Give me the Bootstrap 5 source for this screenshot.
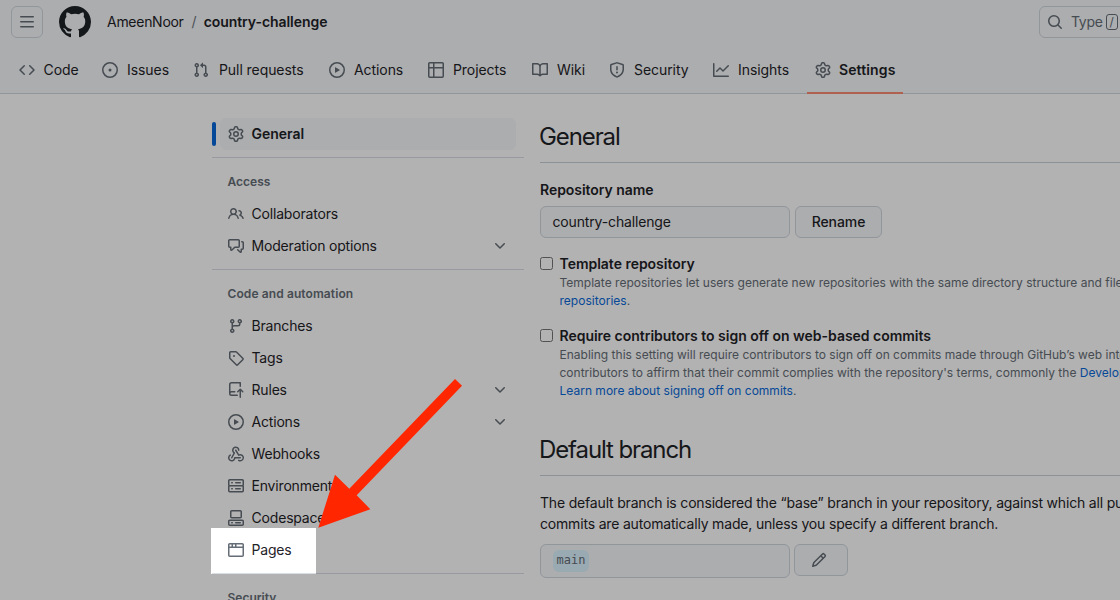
<!DOCTYPE html>
<html lang="en">
<head>
<meta charset="utf-8">
<meta name="viewport" content="width=device-width, initial-scale=1">
<title>Settings · country-challenge</title>
<link href="https://cdn.jsdelivr.net/npm/bootstrap@5.3.0/dist/css/bootstrap.min.css" rel="stylesheet">
<style>
  :root { --ink:#1f2328; --muted:#656d76; --line:#d0d7de; --soft:#f6f8fa; --link:#0969da; }
  body { font-family: Inter, "Liberation Sans", sans-serif; font-size:14px; line-height:21px; color:var(--ink); background:#fff; height:600px; overflow:hidden; position:relative; }
  svg.oct { width:16px; height:16px; fill:var(--muted); flex:none; display:block; }
  a { color:inherit; text-decoration:none; }
  .topbar { background:var(--soft); height:94px; border-bottom:1px solid var(--line); }
  .crumbs { height:44px; padding-left:11px; overflow:hidden; }
  .crumbs span, .crumbs a { padding-bottom:1px; }
  .owner { letter-spacing:-.28px; }
  .repo { letter-spacing:-.06px; margin-left:-1px; }
  .iconbtn { width:32px; height:32px; border:1px solid var(--line); border-radius:6px; background:transparent; }
  .logo { width:32px; height:32px; fill:var(--ink); }
  .search { width:120px; height:32px; border:1px solid var(--line); border-radius:6px; color:var(--muted); padding-left:7px; margin-right:-39px; letter-spacing:-.3px; }
  .slash { width:12px; height:16px; border:1px solid var(--muted); border-radius:3px; font-size:12px; line-height:13px; margin-left:3px; }
  .tabs { height:49px; padding-left:11px; gap:8px; }
  .tabs a { height:50px; padding:2px 0 0 8px; gap:9px; flex:none; letter-spacing:-.07px; white-space:nowrap; }
  .tabs span { padding-bottom:2px; }
  .tabs a.current { font-weight:600; letter-spacing:.12px; gap:8px; box-shadow:inset 0 -2px #fd8c73; }
  .tabs a:nth-child(1) { width:75px; gap:8.5px; }
  .tabs a:nth-child(2) { width:83px; }
  .tabs a:nth-child(3) { width:128px; gap:10px; }
  .tabs a:nth-child(4) { width:91px; }
  .tabs a:nth-child(5), .tabs a:nth-child(7), .tabs a:nth-child(9) { width:96px; }
  .tabs a:nth-child(6) { width:69px; }
  .tabs a:nth-child(8) { width:94px; }
  .page { height:506px; padding-left:212px; overflow:hidden; }
  .side { width:312px; padding-top:24px; flex:none; }
  .side .item { height:32px; margin:0 8px; padding:0 8px; gap:7.5px; border-radius:6px; letter-spacing:-.18px; }
  .side span { padding-bottom:1px; }
  .side .item.current { background:var(--soft); font-weight:600; letter-spacing:0; }
  .marker { width:4px; height:24px; left:-8px; top:4px; border-radius:6px; background:var(--link); }
  .side .rule { height:1px; background:#d8dee4; margin:7px 0 8px; }
  .side .group { height:32px; padding-left:15.5px; font-size:12px; font-weight:600; color:var(--muted); }
  .wide { letter-spacing:.1px; }
  .content { width:700px; margin-left:16px; padding-top:25px; flex:none; white-space:nowrap; }
  .content h2 { font-size:24px; line-height:36px; font-weight:400; margin:0; padding-bottom:7px; border-bottom:1px solid #c9d0d7; letter-spacing:-1.1px; text-indent:-1px; }
  .box { height:32px; border:1px solid var(--line); border-radius:6px; background:var(--soft); }
  .field { width:250px; padding-left:11.5px; letter-spacing:-.15px; }
  .field.tall { height:34px; padding-left:12px; }
  .field > span, .rename > span { padding-bottom:1px; }
  .rename { width:87px; margin-left:5px; letter-spacing:-.08px; }
  .edit { width:54px; margin-left:4px; padding-right:4px; }
  .label-row { margin-top:16px; margin-bottom:6px; letter-spacing:-.05px; }
  .option { margin-top:15px; gap:6.5px; letter-spacing:-.02px; }
  .option .note { font-size:12px; line-height:18px; color:var(--muted); letter-spacing:.01px; }
  .note a { color:var(--link); }
  .second { margin-top:32px !important; }
  .intro { margin-top:16px; margin-bottom:10px; letter-spacing:-.18px; }
  .tick { width:13px; height:13px; border:1px solid #767676; border-radius:2.5px; background:#fff; margin-top:4px; flex:none; }
  .branchname { font-family:"DejaVu Sans Mono", monospace; font-size:12px; line-height:20px; height:22px; padding:0 3.6px; background:#ddf4ff; border-radius:6px; color:var(--muted); letter-spacing:0; }
  .spot { left:211px; top:528px; width:105px; height:46px; box-shadow:0 0 0 1200px rgba(0,0,0,.3); }
  .pointer { left:0; top:0; width:1120px; height:600px; pointer-events:none; }
</style>
</head>
<body>
<svg width="0" height="0" class="position-absolute">
  <symbol id="bars" viewBox="0 0 16 16"><path d="M1 2.75A.75.75 0 0 1 1.75 2h12.5a.75.75 0 0 1 0 1.5H1.75A.75.75 0 0 1 1 2.75Zm0 5A.75.75 0 0 1 1.75 7h12.5a.75.75 0 0 1 0 1.5H1.75A.75.75 0 0 1 1 7.75ZM1.75 12h12.5a.75.75 0 0 1 0 1.5H1.75a.75.75 0 0 1 0-1.5Z"/></symbol>
  <symbol id="github" viewBox="0 0 16 16"><path d="M8 0c4.42 0 8 3.58 8 8a8.013 8.013 0 0 1-5.45 7.59c-.4.08-.55-.17-.55-.38 0-.27.01-1.13.01-2.2 0-.75-.25-1.23-.54-1.48 1.78-.2 3.65-.88 3.65-3.95 0-.88-.31-1.59-.82-2.15.08-.2.36-1.02-.08-2.12 0 0-.67-.22-2.2.82-.64-.18-1.32-.27-2-.27-.68 0-1.36.09-2 .27-1.53-1.03-2.2-.82-2.2-.82-.44 1.1-.16 1.92-.08 2.12-.51.56-.82 1.28-.82 2.15 0 3.06 1.86 3.75 3.64 3.95-.23.2-.44.55-.51 1.07-.46.21-1.61.55-2.33-.66-.15-.24-.6-.83-1.23-.82-.67.01-.27.38.01.53.34.19.73.9.82 1.13.16.45.68 1.31 2.69.94 0 .67.01 1.3.01 1.49 0 .21-.15.45-.55.38A7.995 7.995 0 0 1 0 8c0-4.42 3.58-8 8-8Z"/></symbol>
  <symbol id="code" viewBox="0 0 16 16"><path d="m11.28 3.22 4.25 4.25a.75.75 0 0 1 0 1.06l-4.25 4.25a.749.749 0 0 1-1.275-.326.749.749 0 0 1 .215-.734L13.94 8l-3.72-3.72a.749.749 0 0 1 .326-1.275.749.749 0 0 1 .734.215Zm-6.56 0a.751.751 0 0 1 1.042.018.751.751 0 0 1 .018 1.042L2.06 8l3.72 3.72a.749.749 0 0 1-.326 1.275.749.749 0 0 1-.734-.215L.47 8.53a.75.75 0 0 1 0-1.06Z"/></symbol>
  <symbol id="issue" viewBox="0 0 16 16"><path d="M8 9.5a1.5 1.5 0 1 0 0-3 1.5 1.5 0 0 0 0 3Z"/><path d="M8 0a8 8 0 1 1 0 16A8 8 0 0 1 8 0ZM1.5 8a6.5 6.5 0 1 0 13 0 6.5 6.5 0 0 0-13 0Z"/></symbol>
  <symbol id="pull" viewBox="0 0 16 16"><path d="M1.5 3.25a2.25 2.25 0 1 1 3 2.122v5.256a2.251 2.251 0 1 1-1.5 0V5.372A2.25 2.25 0 0 1 1.5 3.25Zm5.677-.177L9.573.677A.25.25 0 0 1 10 .854V2.5h1A2.5 2.5 0 0 1 13.5 5v5.628a2.251 2.251 0 1 1-1.5 0V5a1 1 0 0 0-1-1h-1v1.646a.25.25 0 0 1-.427.177L7.177 3.427a.25.25 0 0 1 0-.354ZM3.75 2.5a.75.75 0 1 0 0 1.5.75.75 0 0 0 0-1.5Zm0 9.5a.75.75 0 1 0 0 1.5.75.75 0 0 0 0-1.5Zm8.25.75a.75.75 0 1 0 1.5 0 .75.75 0 0 0-1.5 0Z"/></symbol>
  <symbol id="play" viewBox="0 0 16 16"><path d="M8 0a8 8 0 1 1 0 16A8 8 0 0 1 8 0ZM1.5 8a6.5 6.5 0 1 0 13 0 6.5 6.5 0 0 0-13 0Zm4.879-2.773 4.264 2.559a.25.25 0 0 1 0 .428l-4.264 2.559A.25.25 0 0 1 6 10.559V5.442a.25.25 0 0 1 .379-.215Z"/></symbol>
  <symbol id="project" viewBox="0 0 16 16"><path d="M0 1.75C0 .784.784 0 1.75 0h12.5C15.216 0 16 .784 16 1.75v12.5A1.75 1.75 0 0 1 14.25 16H1.75A1.75 1.75 0 0 1 0 14.25ZM6.5 6.5v8h7.75a.25.25 0 0 0 .25-.25V6.5Zm8-1.5V1.75a.25.25 0 0 0-.25-.25H6.5V5Zm-13 1.5v7.75c0 .138.112.25.25.25H5v-8ZM5 5V1.5H1.75a.25.25 0 0 0-.25.25V5Z"/></symbol>
  <symbol id="book" viewBox="0 0 16 16"><path d="M0 1.75A.75.75 0 0 1 .75 1h4.253c1.227 0 2.317.59 3 1.501A3.743 3.743 0 0 1 11.006 1h4.245a.75.75 0 0 1 .75.75v10.5a.75.75 0 0 1-.75.75h-4.507a2.25 2.25 0 0 0-1.591.659l-.622.621a.75.75 0 0 1-1.06 0l-.622-.621A2.25 2.25 0 0 0 5.258 13H.75a.75.75 0 0 1-.75-.75Zm7.251 10.324.004-5.073-.002-2.253A2.25 2.25 0 0 0 5.003 2.5H1.5v9h3.757a3.75 3.75 0 0 1 1.994.574ZM8.755 4.75l-.004 7.322a3.752 3.752 0 0 1 1.992-.572H14.5v-9h-3.495a2.25 2.25 0 0 0-2.25 2.25Z"/></symbol>
  <symbol id="shield" viewBox="0 0 16 16"><path d="M7.467.133a1.748 1.748 0 0 1 1.066 0l5.25 1.68A1.75 1.75 0 0 1 15 3.48V7c0 1.566-.32 3.182-1.303 4.682-.983 1.498-2.585 2.813-5.032 3.855a1.697 1.697 0 0 1-1.33 0c-2.447-1.042-4.049-2.357-5.032-3.855C1.32 10.182 1 8.566 1 7V3.48a1.75 1.75 0 0 1 1.217-1.667Zm.61 1.429a.25.25 0 0 0-.153 0l-5.25 1.68a.25.25 0 0 0-.174.238V7c0 1.358.275 2.666 1.057 3.86.784 1.194 2.121 2.34 4.366 3.297a.196.196 0 0 0 .154 0c2.245-.956 3.582-2.104 4.366-3.298C13.225 9.666 13.5 8.36 13.5 7V3.48a.251.251 0 0 0-.174-.237l-5.25-1.68ZM8.75 4.75v3a.75.75 0 0 1-1.5 0v-3a.75.75 0 0 1 1.5 0ZM9 10.5a1 1 0 1 1-2 0 1 1 0 0 1 2 0Z"/></symbol>
  <symbol id="graph" viewBox="0 0 16 16"><path d="M1.5 1.75V13.5h13.75a.75.75 0 0 1 0 1.5H.75a.75.75 0 0 1-.75-.75V1.75a.75.75 0 0 1 1.5 0Zm14.28 2.53-5.25 5.25a.75.75 0 0 1-1.06 0L7 7.06 4.28 9.78a.751.751 0 0 1-1.042-.018.751.751 0 0 1-.018-1.042l3.25-3.25a.75.75 0 0 1 1.06 0L10 7.94l4.72-4.72a.751.751 0 0 1 1.042.018.751.751 0 0 1 .018 1.042Z"/></symbol>
  <symbol id="gear" viewBox="0 0 16 16"><path d="M8 0a8.2 8.2 0 0 1 .701.031C9.444.095 9.99.645 10.16 1.29l.288 1.107c.018.066.079.158.212.224.231.114.454.243.668.386.123.082.233.09.299.071l1.103-.303c.644-.176 1.392.021 1.82.63.27.385.506.792.704 1.218.315.675.111 1.422-.364 1.891l-.814.806c-.049.048-.098.147-.088.294.016.257.016.515 0 .772-.01.147.038.246.088.294l.814.806c.475.469.679 1.216.364 1.891a7.977 7.977 0 0 1-.704 1.217c-.428.61-1.176.807-1.82.63l-1.102-.302c-.067-.019-.177-.011-.3.071a5.909 5.909 0 0 1-.668.386c-.133.066-.194.158-.211.224l-.29 1.106c-.168.646-.715 1.196-1.458 1.26a8.006 8.006 0 0 1-1.402 0c-.743-.064-1.289-.614-1.458-1.26l-.289-1.106c-.018-.066-.079-.158-.212-.224a5.738 5.738 0 0 1-.668-.386c-.123-.082-.233-.09-.299-.071l-1.103.303c-.644.176-1.392-.021-1.82-.63a8.12 8.12 0 0 1-.704-1.218c-.315-.675-.111-1.422.363-1.891l.815-.806c.05-.048.098-.147.088-.294a6.214 6.214 0 0 1 0-.772c.01-.147-.038-.246-.088-.294l-.815-.806C.635 6.045.431 5.298.746 4.623a7.92 7.92 0 0 1 .704-1.217c.428-.61 1.176-.807 1.82-.63l1.102.302c.067.019.177.011.3-.071.214-.143.437-.272.668-.386.133-.066.194-.158.211-.224l.29-1.106C6.009.645 6.556.095 7.299.03 7.53.01 7.764 0 8 0Zm-.571 1.525c-.036.003-.108.036-.137.146l-.289 1.105c-.147.561-.549.967-.998 1.189-.173.086-.34.183-.5.29-.417.278-.97.423-1.529.27l-1.103-.303c-.109-.03-.175.016-.195.045-.22.312-.412.644-.573.99-.014.031-.021.11.059.19l.815.806c.411.406.562.957.53 1.456a4.709 4.709 0 0 0 0 .582c.032.499-.119 1.05-.53 1.456l-.815.806c-.081.08-.073.159-.059.19.162.346.353.677.573.989.02.03.085.076.195.046l1.102-.303c.56-.153 1.113-.008 1.53.27.161.107.328.204.501.29.447.222.85.629.997 1.189l.289 1.105c.029.109.101.143.137.146a6.6 6.6 0 0 0 1.142 0c.036-.003.108-.036.137-.146l.289-1.105c.147-.561.549-.967.998-1.189.173-.086.34-.183.5-.29.417-.278.97-.423 1.529-.27l1.103.303c.109.029.175-.016.195-.045.22-.313.411-.644.573-.99.014-.031.021-.11-.059-.19l-.815-.806c-.411-.406-.562-.957-.53-1.456a4.709 4.709 0 0 0 0-.582c-.032-.499.119-1.05.53-1.456l.815-.806c.081-.08.073-.159.059-.19a6.464 6.464 0 0 0-.573-.989c-.02-.03-.085-.076-.195-.046l-1.102.303c-.56.153-1.113.008-1.53-.27a4.44 4.44 0 0 0-.501-.29c-.447-.222-.85-.629-.997-1.189l-.289-1.105c-.029-.11-.101-.143-.137-.146a6.6 6.6 0 0 0-1.142 0ZM11 8a3 3 0 1 1-6 0 3 3 0 0 1 6 0ZM9.5 8a1.5 1.5 0 1 0-3.001.001A1.5 1.5 0 0 0 9.5 8Z"/></symbol>
  <symbol id="search" viewBox="0 0 16 16"><path d="M10.68 11.74a6 6 0 0 1-7.922-8.982 6 6 0 0 1 8.982 7.922l3.04 3.04a.749.749 0 0 1-.326 1.275.749.749 0 0 1-.734-.215ZM11.5 7a4.499 4.499 0 1 0-8.997 0A4.499 4.499 0 0 0 11.5 7Z"/></symbol>
  <symbol id="people" viewBox="0 0 16 16"><path d="M2 5.5a3.5 3.5 0 1 1 5.898 2.549 5.508 5.508 0 0 1 3.034 4.084.75.75 0 1 1-1.482.235 4 4 0 0 0-7.9 0 .75.75 0 0 1-1.482-.236A5.507 5.507 0 0 1 3.102 8.05 3.493 3.493 0 0 1 2 5.5ZM11 4a3.001 3.001 0 0 1 2.22 5.018 5.01 5.01 0 0 1 2.56 3.012.749.749 0 0 1-.885.954.752.752 0 0 1-.549-.514 3.507 3.507 0 0 0-2.522-2.372.75.75 0 0 1-.574-.73v-.352a.75.75 0 0 1 .416-.672A1.5 1.5 0 0 0 11 5.5.75.75 0 0 1 11 4Zm-5.5-.5a2 2 0 1 0-.001 3.999A2 2 0 0 0 5.5 3.5Z"/></symbol>
  <symbol id="talk" viewBox="0 0 16 16"><path d="M1.75 1h8.5c.966 0 1.75.784 1.75 1.75v5.5A1.75 1.75 0 0 1 10.25 10H7.061l-2.574 2.573A1.458 1.458 0 0 1 2 11.543V10h-.25A1.75 1.75 0 0 1 0 8.25v-5.5C0 1.784.784 1 1.75 1ZM1.5 2.75v5.5c0 .138.112.25.25.25h1a.75.75 0 0 1 .75.75v2.19l2.72-2.72a.749.749 0 0 1 .53-.22h3.5a.25.25 0 0 0 .25-.25v-5.5a.25.25 0 0 0-.25-.25h-8.5a.25.25 0 0 0-.25.25Zm13 2a.25.25 0 0 0-.25-.25h-.5a.75.75 0 0 1 0-1.5h.5c.966 0 1.75.784 1.75 1.75v5.5A1.75 1.75 0 0 1 14.25 12H14v1.543a1.458 1.458 0 0 1-2.487 1.03L9.22 12.28a.749.749 0 0 1 .326-1.275.749.749 0 0 1 .734.215l2.22 2.22v-2.19a.75.75 0 0 1 .75-.75h1a.25.25 0 0 0 .25-.25Z"/></symbol>
  <symbol id="down" viewBox="0 0 16 16"><path d="M12.78 5.22a.749.749 0 0 1 0 1.06l-4.25 4.25a.749.749 0 0 1-1.06 0L3.22 6.28a.749.749 0 1 1 1.06-1.06L8 8.939l3.72-3.719a.749.749 0 0 1 1.06 0Z"/></symbol>
  <symbol id="branch" viewBox="0 0 16 16"><path d="M9.5 3.25a2.25 2.25 0 1 1 3 2.122V6A2.5 2.5 0 0 1 10 8.5H6a1 1 0 0 0-1 1v1.128a2.251 2.251 0 1 1-1.5 0V5.372a2.25 2.25 0 1 1 1.5 0v1.836A2.493 2.493 0 0 1 6 7h4a1 1 0 0 0 1-1v-.628A2.25 2.25 0 0 1 9.5 3.25Zm-6 0a.75.75 0 1 0 1.5 0 .75.75 0 0 0-1.5 0Zm8.25-.75a.75.75 0 1 0 0 1.5.75.75 0 0 0 0-1.5ZM4.25 12a.75.75 0 1 0 0 1.5.75.75 0 0 0 0-1.5Z"/></symbol>
  <symbol id="tag" viewBox="0 0 16 16"><path d="M1 7.775V2.75C1 1.784 1.784 1 2.75 1h5.025c.464 0 .91.184 1.238.513l6.25 6.25a1.75 1.75 0 0 1 0 2.474l-5.026 5.026a1.75 1.75 0 0 1-2.474 0l-6.25-6.25A1.752 1.752 0 0 1 1 7.775Zm1.5 0c0 .066.026.13.073.177l6.25 6.25a.25.25 0 0 0 .354 0l5.025-5.025a.25.25 0 0 0 0-.354l-6.25-6.25a.25.25 0 0 0-.177-.073H2.75a.25.25 0 0 0-.25.25ZM6 5a1 1 0 1 1 0 2 1 1 0 0 1 0-2Z"/></symbol>
  <symbol id="rules" viewBox="0 0 16 16"><path d="M1 2.5A2.5 2.5 0 0 1 3.5 0h8.75a.75.75 0 0 1 .75.75v3.5a.75.75 0 0 1-1.5 0V1.5h-8a1 1 0 0 0-1 1v6.708A2.493 2.493 0 0 1 3.5 9h3.25a.75.75 0 0 1 0 1.5H3.5a1 1 0 0 0 0 2h5.75a.75.75 0 0 1 0 1.5H3.5A2.5 2.5 0 0 1 1 11.5Zm13.23 7.79h-.001l-1.224-1.224v6.184a.75.75 0 0 1-1.5 0V9.066L10.28 10.29a.75.75 0 0 1-1.06-1.061l2.505-2.504a.75.75 0 0 1 1.06 0L15.29 9.23a.751.751 0 0 1-.018 1.042.751.751 0 0 1-1.042.018Z"/></symbol>
  <symbol id="hook" viewBox="0 0 16 16"><path d="M5.5 4.25a2.25 2.25 0 0 1 4.5 0 .75.75 0 0 0 1.5 0 3.75 3.75 0 1 0-6.14 2.889l-2.272 4.258a.75.75 0 0 0 1.324.706L7 7.25a.75.75 0 0 0-.309-1.015A2.25 2.25 0 0 1 5.5 4.25Z"/><path d="M7.364 3.607a.75.75 0 0 1 1.03.257l2.608 4.349a3.75 3.75 0 1 1-.628 6.785.75.75 0 0 1 .752-1.299 2.25 2.25 0 1 0-.033-3.88.75.75 0 0 1-1.03-.256L7.107 4.636a.75.75 0 0 1 .257-1.03Z"/><path d="M2.9 8.776A.75.75 0 0 1 2.625 9.8 2.25 2.25 0 1 0 6 11.75a.75.75 0 0 1 .75-.751h5.5a.75.75 0 0 1 0 1.5H7.425a3.751 3.751 0 1 1-5.55-3.998.75.75 0 0 1 1.024.274Z"/></symbol>
  <symbol id="server" viewBox="0 0 16 16"><path d="M1.75 1h12.5c.966 0 1.75.784 1.75 1.75v4c0 .372-.116.717-.314 1 .198.283.314.628.314 1v4a1.75 1.75 0 0 1-1.75 1.75H1.75A1.75 1.75 0 0 1 0 12.75v-4c0-.358.109-.707.314-1a1.739 1.739 0 0 1-.314-1v-4C0 1.784.784 1 1.75 1ZM1.5 2.75v4c0 .138.112.25.25.25h12.5a.25.25 0 0 0 .25-.25v-4a.25.25 0 0 0-.25-.25H1.75a.25.25 0 0 0-.25.25Zm.25 5.75a.25.25 0 0 0-.25.25v4c0 .138.112.25.25.25h12.5a.25.25 0 0 0 .25-.25v-4a.25.25 0 0 0-.25-.25ZM7 4.75A.75.75 0 0 1 7.75 4h4.5a.75.75 0 0 1 0 1.5h-4.5A.75.75 0 0 1 7 4.75ZM7.75 10h4.5a.75.75 0 0 1 0 1.5h-4.5a.75.75 0 0 1 0-1.5ZM3 4.75A.75.75 0 0 1 3.75 4h.5a.75.75 0 0 1 0 1.5h-.5A.75.75 0 0 1 3 4.75ZM3.75 10h.5a.75.75 0 0 1 0 1.5h-.5a.75.75 0 0 1 0-1.5Z"/></symbol>
  <symbol id="space" viewBox="0 0 16 16"><path d="M0 11.25c0-.966.784-1.75 1.75-1.75h12.5c.966 0 1.75.784 1.75 1.75v3A1.75 1.75 0 0 1 14.25 16H1.75A1.75 1.75 0 0 1 0 14.25Zm2-9.5C2 .784 2.784 0 3.75 0h8.5C13.216 0 14 .784 14 1.75v5a1.75 1.75 0 0 1-1.75 1.75h-8.5A1.75 1.75 0 0 1 2 6.75Zm1.75-.25a.25.25 0 0 0-.25.25v5c0 .138.112.25.25.25h8.5a.25.25 0 0 0 .25-.25v-5a.25.25 0 0 0-.25-.25Zm-2 9.5a.25.25 0 0 0-.25.25v3c0 .138.112.25.25.25h12.5a.25.25 0 0 0 .25-.25v-3a.25.25 0 0 0-.25-.25Z"/><path d="M7 12.75a.75.75 0 0 1 .75-.75h4.5a.75.75 0 0 1 0 1.5h-4.5a.75.75 0 0 1-.75-.75Zm-4 0a.75.75 0 0 1 .75-.75h.5a.75.75 0 0 1 0 1.5h-.5a.75.75 0 0 1-.75-.75Z"/></symbol>
  <symbol id="browser" viewBox="0 0 16 16"><path d="M0 2.75C0 1.784.784 1 1.75 1h12.5c.966 0 1.75.784 1.75 1.75v10.5A1.75 1.75 0 0 1 14.25 15H1.75A1.75 1.75 0 0 1 0 13.25ZM14.5 6h-13v7.25c0 .138.112.25.25.25h12.5a.25.25 0 0 0 .25-.25Zm-6-3.5v2h6V2.75a.25.25 0 0 0-.25-.25ZM5 2.5v2h2v-2Zm-3.25 0a.25.25 0 0 0-.25.25V4.5h2v-2Z"/></symbol>
  <symbol id="pencil" viewBox="0 0 16 16"><path d="M11.013 1.427a1.75 1.75 0 0 1 2.474 0l1.086 1.086a1.75 1.75 0 0 1 0 2.474l-8.61 8.61c-.21.21-.47.364-.756.445l-3.251.93a.75.75 0 0 1-.927-.928l.929-3.25c.081-.286.235-.547.445-.758l8.61-8.61Zm.176 4.823L9.75 4.81l-6.286 6.287a.253.253 0 0 0-.064.108l-.558 1.953 1.953-.558a.253.253 0 0 0 .108-.064Zm1.238-3.763a.25.25 0 0 0-.354 0L10.811 3.75l1.439 1.44 1.263-1.263a.25.25 0 0 0 0-.354Z"/></symbol>
</svg>

<header class="topbar">
  <div class="crumbs d-flex align-items-center">
    <button class="iconbtn d-flex align-items-center justify-content-center p-0" type="button" aria-label="Menu"><svg class="oct"><use href="#bars"/></svg></button>
    <svg class="logo ms-3 me-3"><use href="#github"/></svg>
    <a href="#" class="owner">AmeenNoor</a>
    <span class="mx-2 text-secondary">/</span>
    <a href="#" class="repo fw-semibold">country-challenge</a>
    <div class="search d-flex align-items-center ms-auto"><svg class="oct me-2"><use href="#search"/></svg><span>Type</span><span class="slash text-center">/</span></div>
  </div>
  <nav class="tabs d-flex">
    <a href="#" class="d-flex align-items-center"><svg class="oct"><use href="#code"/></svg><span>Code</span></a>
    <a href="#" class="d-flex align-items-center"><svg class="oct"><use href="#issue"/></svg><span>Issues</span></a>
    <a href="#" class="d-flex align-items-center"><svg class="oct"><use href="#pull"/></svg><span>Pull requests</span></a>
    <a href="#" class="d-flex align-items-center"><svg class="oct"><use href="#play"/></svg><span>Actions</span></a>
    <a href="#" class="d-flex align-items-center"><svg class="oct"><use href="#project"/></svg><span>Projects</span></a>
    <a href="#" class="d-flex align-items-center"><svg class="oct"><use href="#book"/></svg><span>Wiki</span></a>
    <a href="#" class="d-flex align-items-center"><svg class="oct"><use href="#shield"/></svg><span>Security</span></a>
    <a href="#" class="d-flex align-items-center"><svg class="oct"><use href="#graph"/></svg><span>Insights</span></a>
    <a href="#" class="d-flex align-items-center current"><svg class="oct"><use href="#gear"/></svg><span>Settings</span></a>
  </nav>
</header>

<main class="page d-flex">
  <aside class="side">
    <a href="#" class="item current d-flex align-items-center position-relative"><span class="marker position-absolute"></span><svg class="oct"><use href="#gear"/></svg><span>General</span></a>
    <div class="rule"></div>
    <div class="group d-flex align-items-center"><span>Access</span></div>
    <a href="#" class="item d-flex align-items-center"><svg class="oct"><use href="#people"/></svg><span>Collaborators</span></a>
    <a href="#" class="item d-flex align-items-center"><svg class="oct"><use href="#talk"/></svg><span>Moderation options</span><svg class="oct ms-auto"><use href="#down"/></svg></a>
    <div class="rule"></div>
    <div class="group d-flex align-items-center"><span class="wide">Code and automation</span></div>
    <a href="#" class="item d-flex align-items-center"><svg class="oct"><use href="#branch"/></svg><span>Branches</span></a>
    <a href="#" class="item d-flex align-items-center"><svg class="oct"><use href="#tag"/></svg><span>Tags</span></a>
    <a href="#" class="item d-flex align-items-center"><svg class="oct"><use href="#rules"/></svg><span>Rules</span><svg class="oct ms-auto"><use href="#down"/></svg></a>
    <a href="#" class="item d-flex align-items-center"><svg class="oct"><use href="#play"/></svg><span>Actions</span><svg class="oct ms-auto"><use href="#down"/></svg></a>
    <a href="#" class="item d-flex align-items-center"><svg class="oct"><use href="#hook"/></svg><span>Webhooks</span></a>
    <a href="#" class="item d-flex align-items-center"><svg class="oct"><use href="#server"/></svg><span>Environments</span></a>
    <a href="#" class="item d-flex align-items-center"><svg class="oct"><use href="#space"/></svg><span>Codespaces</span></a>
    <a href="#" class="item d-flex align-items-center"><svg class="oct"><use href="#browser"/></svg><span>Pages</span></a>
    <div class="rule"></div>
    <div class="group d-flex align-items-center"><span>Security</span></div>
  </aside>

  <section class="content">
    <h2>General</h2>
    <div class="label-row fw-semibold">Repository name</div>
    <div class="d-flex">
      <div class="box field d-flex align-items-center"><span>country-challenge</span></div>
      <div class="box rename d-flex align-items-center justify-content-center fw-medium"><span>Rename</span></div>
    </div>
    <div class="option d-flex">
      <span class="tick"></span>
      <div>
        <div class="fw-semibold">Template repository</div>
        <div class="note">Template repositories let users generate new repositories with the same directory structure and files.<br><a href="#">repositories</a>.</div>
      </div>
    </div>
    <div class="option d-flex">
      <span class="tick"></span>
      <div>
        <div class="fw-semibold">Require contributors to sign off on web-based commits</div>
        <div class="note">Enabling this setting will require contributors to sign off on commits made through GitHub’s web interface<br>contributors to affirm that their commit complies with the repository's terms, commonly the <a href="#">Developer</a><br><a href="#">Learn more about signing off on commits</a>.</div>
      </div>
    </div>
    <h2 class="second">Default branch</h2>
    <div class="intro">The default branch is considered the “base” branch in your repository, against which all pull<br>commits are automatically made, unless you specify a different branch.</div>
    <div class="d-flex">
      <div class="box field tall d-flex align-items-center"><span class="branchname">main</span></div>
      <div class="box edit d-flex align-items-center justify-content-center"><svg class="oct"><use href="#pencil"/></svg></div>
    </div>
  </section>
</main>

<div class="spot position-absolute"></div>
<svg class="pointer position-absolute" viewBox="0 0 1120 600"><path fill="#ff2600" d="M455 379 462 385.7 356.7 495.3 370.3 509.3 318.3 527.7 335 474.7 349.3 488.7Z"/></svg>
<script src="https://cdn.jsdelivr.net/npm/bootstrap@5.3.0/dist/js/bootstrap.bundle.min.js"></script>
</body>
</html>
